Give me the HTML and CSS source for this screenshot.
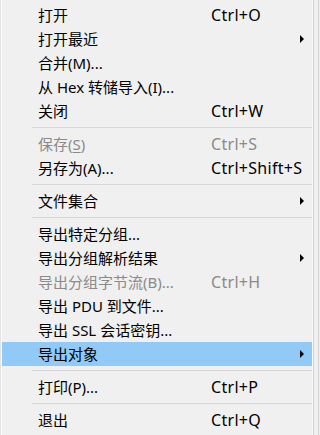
FILE: index.html
```html
<!DOCTYPE html>
<html>
<head>
  <title>文件菜单</title>
  <meta name="viewport" content="width=device-width, initial-scale=1" />
  <link rel="stylesheet" href="styles.css">
</head>
<body>
  <div class="frame">
    <ul class="menu">
      <li class="item"><span class="label">打开</span><span class="key">Ctrl+O</span></li>
      <li class="item sub"><span class="label">打开最近</span><span class="key"></span><span class="arrow"></span></li>
      <li class="item"><span class="label">合并(M)...</span></li>
      <li class="item"><span class="label">从 Hex 转储导入(I)...</span></li>
      <li class="item"><span class="label">关闭</span><span class="key">Ctrl+W</span></li>
      <li class="sep"></li>
      <li class="item disabled"><span class="label">保存(<u>S</u>)</span><span class="key">Ctrl+S</span></li>
      <li class="item"><span class="label">另存为(A)...</span><span class="key">Ctrl+Shift+S</span></li>
      <li class="sep"></li>
      <li class="item sub"><span class="label">文件集合</span><span class="key"></span><span class="arrow"></span></li>
      <li class="sep"></li>
      <li class="item"><span class="label">导出特定分组...</span></li>
      <li class="item sub"><span class="label">导出分组解析结果</span><span class="key"></span><span class="arrow"></span></li>
      <li class="item disabled"><span class="label">导出分组字节流(B)...</span><span class="key">Ctrl+H</span></li>
      <li class="item"><span class="label">导出 PDU 到文件...</span></li>
      <li class="item"><span class="label">导出 SSL 会话密钥...</span></li>
      <li class="item sub active"><span class="label">导出对象</span><span class="key"></span><span class="arrow"></span></li>
      <li class="sep"></li>
      <li class="item"><span class="label">打印(P)...</span><span class="key">Ctrl+P</span></li>
      <li class="sep"></li>
      <li class="item"><span class="label">退出</span><span class="key">Ctrl+Q</span></li>
    </ul>
  </div>
</body>
</html>
```

FILE: styles.css
```css
html, body { margin: 0; padding: 0; background: #f0f0f0; }
body { width: 320px; height: 435px; overflow: hidden; font-family: "Noto Sans", "Noto Sans CJK SC", sans-serif; font-size: 15px; color: #000; }
.frame { width: 319px; height: 435px; border-right: 1px solid #d4d4d4; box-sizing: border-box; }
.menu { list-style: none; margin: 0; padding: 3px 0; width: 314px; height: 435px; box-sizing: border-box; border-left: 1px solid #e3e3e3; border-right: 1px solid #d0d0d0; box-shadow: inset 1px 0 0 #fbfbfb, inset -1px 0 0 #fbfbfb; }
.item { display: grid; grid-template-columns: 173px 1fr 4px; align-items: center; height: 24px; padding: 0 8px 0 36px; margin: 0 1px; line-height: 24px; white-space: nowrap; }
.key { font-size: 16px; letter-spacing: 0.3px; }
.label u { text-decoration: underline; text-underline-offset: 2px; }
.disabled { color: #8a8a8a; }
.active { background: #91c9f7; }
.arrow { width: 0; height: 0; border-left: 4px solid #000; border-top: 4px solid transparent; border-bottom: 4px solid transparent; }
.sep { height: 9px; margin: 0 1px 0 31px; position: relative; }
.sep::after { content: ""; position: absolute; left: 0; right: 0; top: 4px; height: 1px; background: #d7d7d7; }
```
